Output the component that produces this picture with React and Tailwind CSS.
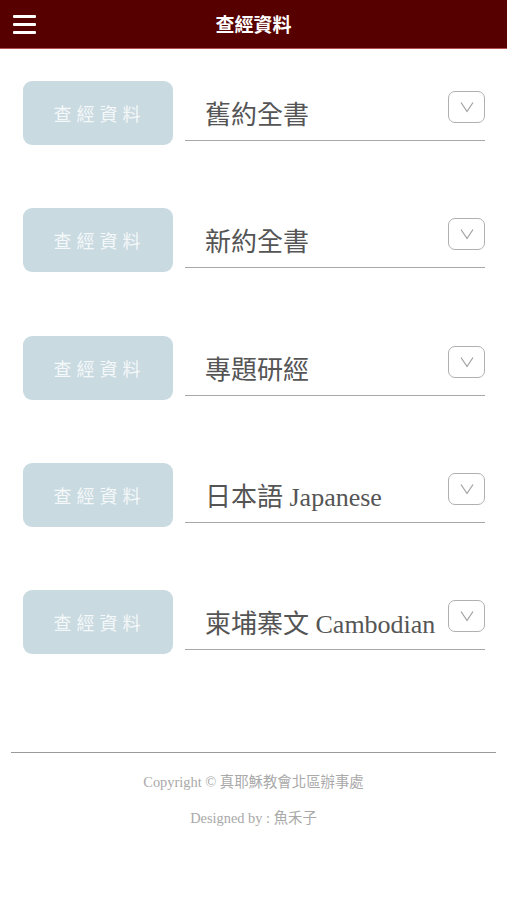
import React from "react";

const items = ["舊約全書", "新約全書", "專題研經", "日本語 Japanese", "柬埔寨文 Cambodian"];

function Row({ label }) {
  return (
    <div className="flex items-start h-[64px]">
      <button className="ml-[23px] w-[150px] h-[64px] rounded-[9px] bg-[#c9dae1] text-[#f5f8f9] text-[18px] tracking-[5px] pl-[3px] flex items-center justify-center">
        <span className="[font-family:'Noto_Sans_CJK_TC',sans-serif] leading-none">查經資料</span>
      </button>
      <div className="ml-[12px] w-[300px] h-[60px] border-b-[1.5px] border-[#a8a8a8] flex items-start justify-between">
        <span className="pl-[20px] mt-[22px] text-[26px] leading-[26px] text-[#555555] whitespace-nowrap [font-family:'Liberation_Serif','Noto_Sans_CJK_TC',serif]">
          {label}
        </span>
        <div className="mt-[10px] w-[37px] h-[32px] border-[1.5px] border-[#b0b0b0] rounded-[7px] flex items-center justify-center shrink-0">
          <svg width="16" height="12" viewBox="0 0 16 12" fill="none">
            <path d="M2 1.5 L8 10.5 L14 1.5" stroke="#a0a0a0" strokeWidth="1.2" />
          </svg>
        </div>
      </div>
    </div>
  );
}

export default function App() {
  return (
    <div className="w-[507px] min-h-[900px] bg-white">
      <header className="h-[49px] bg-[#560000] border-b border-[#b05050] grid grid-cols-[1fr_auto_1fr] items-center">
        <div className="pl-[13px] flex flex-col gap-[5px]">
          <span className="block w-[23px] h-[3px] bg-white rounded-[1px]" />
          <span className="block w-[23px] h-[3px] bg-white rounded-[1px]" />
          <span className="block w-[23px] h-[3px] bg-white rounded-[1px]" />
        </div>
        <h1 className="text-white text-[19px] font-bold leading-none [font-family:'Noto_Sans_CJK_TC',sans-serif] -mt-[2px]">查經資料</h1>
        <div />
      </header>
      <div className="mt-[32px] flex flex-col gap-[63.3px]">
        {items.map((t) => (
          <Row key={t} label={t} />
        ))}
      </div>
      <div className="mt-[98px] mx-[11px] border-t-[1.5px] border-[#9a9a9a]" />
      <div className="text-center text-[14.4px] text-[#a9a9a9] [font-family:'Liberation_Serif','Noto_Sans_CJK_TC',serif]">
        <p className="mt-[20px] leading-[18px]">Copyright © 真耶穌教會北區辦事處</p>
        <p className="mt-[18px] leading-[18px]">Designed by : 魚禾子</p>
      </div>
    </div>
  );
}
